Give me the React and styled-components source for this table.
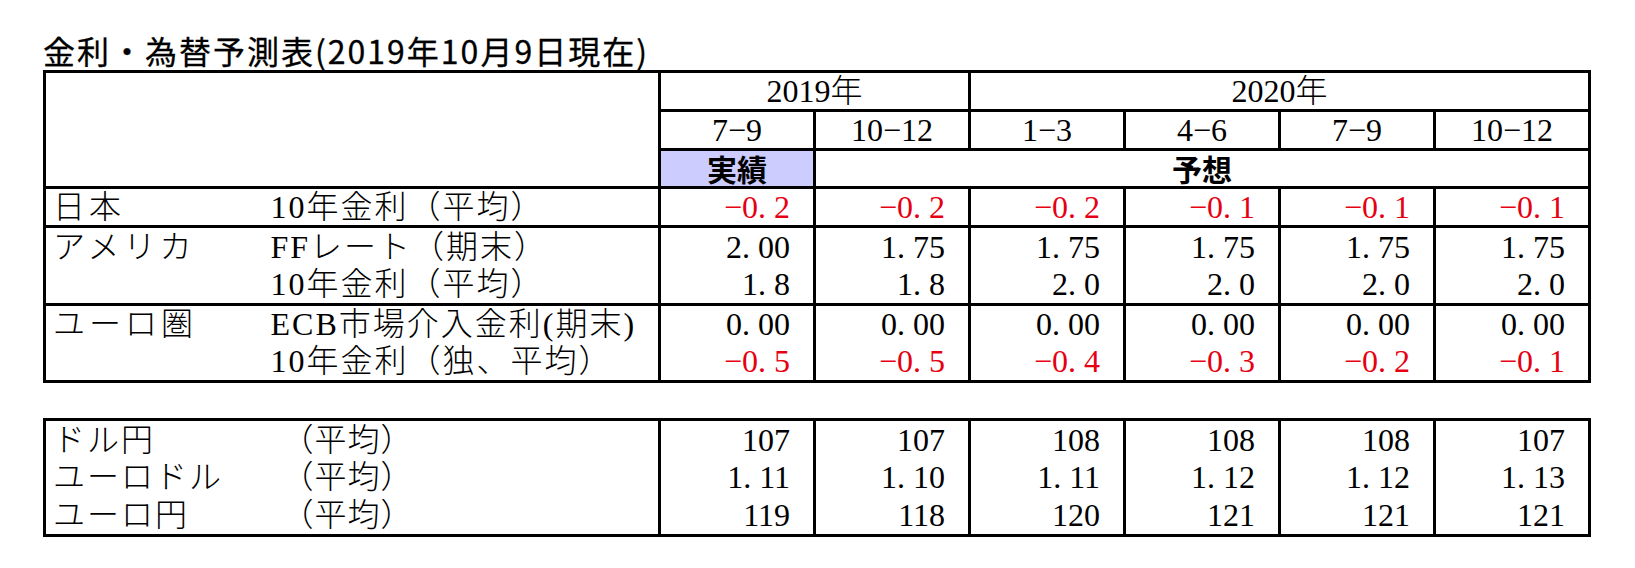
import React from "react";
import styled, { createGlobalStyle } from "styled-components";

const GlobalStyle = createGlobalStyle`
  html, body {
    margin: 0;
    padding: 0;
    background: #fff;
  }
  body {
    font-family: "Liberation Serif", "Noto Sans CJK JP", serif;
    color: #000;
  }
`;

const Page = styled.div`
  padding: 30px 0 0 43px;
`;

const Title = styled.h1`
  margin: 0;
  height: 40px;
  font-family: "Noto Sans CJK JP", "Noto Sans", sans-serif;
  font-weight: 400;
  font-size: 32px;
  line-height: 40px;
  letter-spacing: 2px;
  white-space: nowrap;
  -webkit-text-stroke: 0.3px #000;
`;

const Table = styled.table`
  border-collapse: collapse;
  table-layout: fixed;
  width: 1545px;
  border: 3px solid #000;
  margin-top: ${(p) => p.$gap || 0}px;
  font-family: "Liberation Serif", "Noto Sans CJK JP", serif;
  font-size: 32px;
  font-weight: 300;
`;

const Col = styled.col`
  width: ${(p) => p.$w}px;
`;

const Row = styled.tr`
  height: ${(p) => p.$h || 38.75}px;
  td, th {
    border-top: ${(p) => (p.$sep ? "3px solid #000" : "none")};
  }
`;

const HeadCell = styled.th`
  padding: 0;
  font-weight: 300;
  text-align: center;
  line-height: 1;
  border: 3px solid #000;
  white-space: nowrap;
`;

const BlankHead = styled.th`
  padding: 0;
  border-right: 3px solid #000;
  border-bottom: 3px solid #000;
`;

const MarkCell = styled.th`
  padding: 0;
  font-family: "Noto Sans CJK JP", "Noto Sans", sans-serif;
  font-weight: 700;
  font-size: 30px;
  line-height: 1;
  text-align: center;
  background: ${(p) => (p.$actual ? "#ccccff" : "transparent")};
  border-right: ${(p) => (p.$actual ? "3px solid #000" : "none")};
  border-bottom: 3px solid #000;
`;

const LabelCell = styled.td`
  padding: 0 0 0 ${(p) => p.$indent || 0}px;
  text-align: left;
  line-height: 1;
  letter-spacing: ${(p) => p.$spacing || 2}px;
  white-space: nowrap;
`;

const NumCell = styled.td`
  padding: 0 23px 0 0;
  text-align: right;
  line-height: 1;
  white-space: pre;
  color: ${(p) => (p.$neg ? "#e60012" : "#000")};
  border-left: 3px solid #000;
`;

const quarters = ["7−9", "10−12", "1−3", "4−6", "7−9", "10−12"];

const rateGroups = [
  {
    country: "日本",
    rows: [{ item: "10年金利（平均）", digits: 1, vals: [-0.2, -0.2, -0.2, -0.1, -0.1, -0.1] }],
  },
  {
    country: "アメリカ",
    rows: [
      { item: "FFレート（期末）", digits: 2, vals: [2.0, 1.75, 1.75, 1.75, 1.75, 1.75] },
      { item: "10年金利（平均）", digits: 1, vals: [1.8, 1.8, 2.0, 2.0, 2.0, 2.0] },
    ],
  },
  {
    country: "ユーロ圏",
    rows: [
      { item: "ECB市場介入金利(期末)", digits: 2, vals: [0, 0, 0, 0, 0, 0] },
      { item: "10年金利（独、平均）", digits: 1, vals: [-0.5, -0.5, -0.4, -0.3, -0.2, -0.1] },
    ],
  },
];

const fxRows = [
  { country: "ドル円", digits: 0, vals: [107, 107, 108, 108, 108, 107] },
  { country: "ユーロドル", digits: 2, vals: [1.11, 1.1, 1.11, 1.12, 1.12, 1.13] },
  { country: "ユーロ円", digits: 0, vals: [119, 118, 120, 121, 121, 121] },
];

function fmt(v, digits) {
  return v.toFixed(digits).replace("-", "−").replace(".", ". ");
}

function Cols() {
  return (
    <colgroup>
      <Col $w={225} />
      <Col $w={390} />
      {quarters.map((q, i) => (
        <Col key={i} $w={155} />
      ))}
    </colgroup>
  );
}

function Values({ vals, digits }) {
  return vals.map((v, i) => (
    <NumCell key={i} $neg={v < 0}>
      {fmt(v, digits)}
    </NumCell>
  ));
}

export default function App() {
  return (
    <>
      <GlobalStyle />
      <Page>
        <Title>金利・為替予測表(2019年10月9日現在)</Title>

        <Table>
          <Cols />
          <thead>
            <Row>
              <BlankHead colSpan={2} rowSpan={3} />
              <HeadCell colSpan={2}>2019年</HeadCell>
              <HeadCell colSpan={4}>2020年</HeadCell>
            </Row>
            <Row>
              {quarters.map((q, i) => (
                <HeadCell key={i}>{q}</HeadCell>
              ))}
            </Row>
            <Row>
              <MarkCell $actual>実績</MarkCell>
              <MarkCell colSpan={5}>予想</MarkCell>
            </Row>
          </thead>
          {rateGroups.map((g) => (
            <tbody key={g.country}>
              {g.rows.map((r, i) => (
                <Row key={i} $sep={i === 0}>
                  <LabelCell $indent={7} $spacing={4}>
                    {i === 0 ? g.country : ""}
                  </LabelCell>
                  <LabelCell $indent={1} $spacing={2}>
                    {r.item}
                  </LabelCell>
                  <Values vals={r.vals} digits={r.digits} />
                </Row>
              ))}
            </tbody>
          ))}
        </Table>

        <Table $gap={35}>
          <Cols />
          <tbody>
            {fxRows.map((r) => (
              <Row key={r.country} $h={38.5}>
                <LabelCell $indent={7} $spacing={2}>
                  {r.country}
                </LabelCell>
                <LabelCell $indent={12} $spacing={1}>
                  （平均）
                </LabelCell>
                <Values vals={r.vals} digits={r.digits} />
              </Row>
            ))}
          </tbody>
        </Table>
      </Page>
    </>
  );
}
